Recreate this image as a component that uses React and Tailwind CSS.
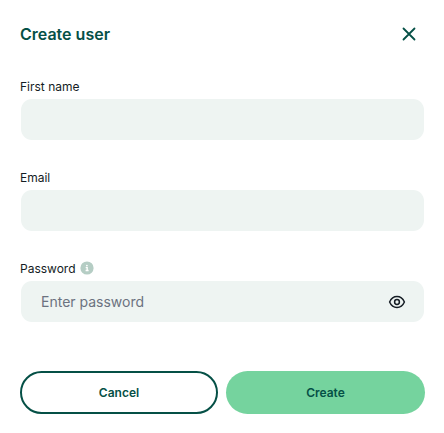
function Field({ id, label, info, placeholder, type = 'text', children }) {
  return (
    <div>
      <div className="flex h-[15px] items-center gap-[4px]">
        <label htmlFor={id} className="text-[12px] leading-[15px] text-[#141c24]">
          {label}
        </label>
        {info}
      </div>
      <div className="mx-px mt-[5px] flex h-[41px] items-center rounded-[11px] bg-[#eef4f2] pr-[18px] pl-5">
        <input
          id={id}
          type={type}
          placeholder={placeholder}
          className="min-w-0 flex-1 bg-transparent text-[14px] leading-5 text-[#141c24] outline-none placeholder:text-[#6b7280]"
        />
        {children}
      </div>
    </div>
  );
}

function InfoIcon() {
  return (
    <svg width="14" height="14" viewBox="0 0 14 14" className="mb-[2px] shrink-0" aria-hidden="true">
      <circle cx="7" cy="7" r="6.6" fill="#b5cdc4" />
      <circle cx="6.9" cy="4.6" r="0.9" fill="#fff" />
      <path d="M5.7 6.7h1.5v2.6M5.6 9.5h3" fill="none" stroke="#fff" strokeWidth="1.3" />
    </svg>
  );
}

function EyeIcon() {
  return (
    <svg width="18" height="14" viewBox="0 0 18 14" fill="none" stroke="#141c24" strokeWidth="1.5" aria-hidden="true">
      <path d="M1.6 7C3.2 3.4 5.8 1.5 9 1.5S14.8 3.4 16.4 7C14.8 10.6 12.2 12.5 9 12.5S3.2 10.6 1.6 7Z" strokeLinejoin="round" />
      <circle cx="9" cy="7" r="2.4" />
    </svg>
  );
}

export default function App() {
  return (
    <main className="h-[433px] w-[444px] bg-white pt-[23px] pr-[19px] pl-5 font-['Inter',sans-serif]">
      <header className="flex h-[22px] items-center justify-between pr-[9px]">
        <h1 className="text-[16px] leading-[22px] font-semibold text-[#055046]">Create user</h1>
        <button type="button" aria-label="Close">
          <svg width="14" height="14" viewBox="0 0 14 14" fill="none" stroke="#055046" strokeWidth="1.8" strokeLinecap="round">
            <path d="M1.5 1.5l11 11M12.5 1.5l-11 11" />
          </svg>
        </button>
      </header>
      <form className="mt-[34px] flex flex-col gap-[30px]">
        <Field id="first-name" label="First name" />
        <Field id="email" label="Email" />
        <Field id="password" label="Password" type="password" placeholder="Enter password" info={<InfoIcon />}>
          <button type="button" aria-label="Show password">
            <EyeIcon />
          </button>
        </Field>
        <div className="mt-[19px] grid grid-cols-[198px_199px] gap-2 text-[12px] font-semibold text-[#055046]">
          <button type="button" className="h-[43px] rounded-full border-2 border-[#055046]">
            Cancel
          </button>
          <button type="button" className="h-[43px] rounded-full bg-[#75d39e]">
            Create
          </button>
        </div>
      </form>
    </main>
  );
}
